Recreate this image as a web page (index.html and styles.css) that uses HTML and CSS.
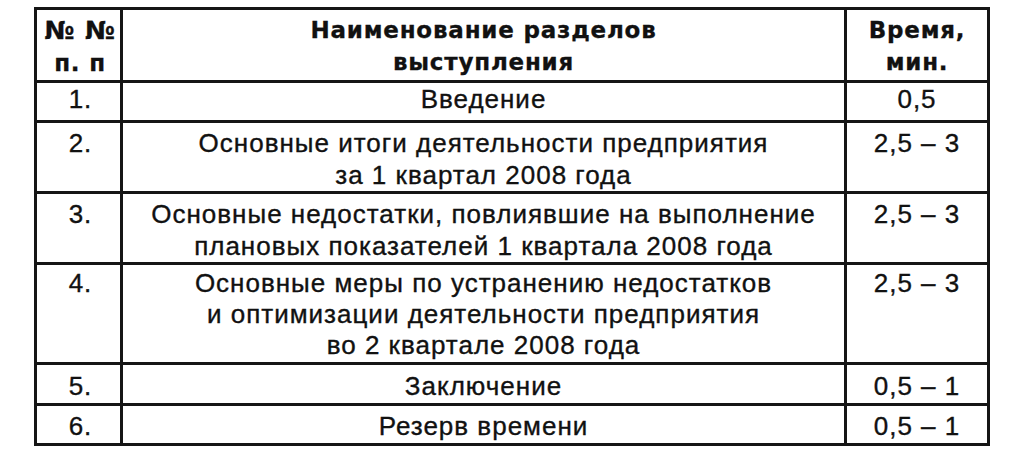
FILE: index.html
```html
<!DOCTYPE html>
<html lang="ru">
<head>
<meta charset="utf-8">
<title>Регламент выступления</title>
<link rel="stylesheet" href="styles.css">
</head>
<body>
<table class="plan">
  <colgroup>
    <col class="c-num">
    <col class="c-name">
    <col class="c-time">
  </colgroup>
  <thead>
    <tr class="r-head">
      <th class="num"><span class="no">№ №</span><br>п. п</th>
      <th class="name">Наименование разделов<br>выступления</th>
      <th class="time">Время,<br>мин.</th>
    </tr>
  </thead>
  <tbody>
    <tr class="r-1">
      <td class="num">1.</td>
      <td class="name">Введение</td>
      <td class="time">0,5</td>
    </tr>
    <tr class="r-2">
      <td class="num">2.</td>
      <td class="name">Основные итоги деятельности предприятия<br>за 1 квартал 2008 года</td>
      <td class="time">2,5 – 3</td>
    </tr>
    <tr class="r-3">
      <td class="num">3.</td>
      <td class="name">Основные недостатки, повлиявшие на выполнение<br>плановых показателей 1 квартала 2008 года</td>
      <td class="time">2,5 – 3</td>
    </tr>
    <tr class="r-4">
      <td class="num">4.</td>
      <td class="name">Основные меры по устранению недостатков<br>и оптимизации деятельности предприятия<br>во 2 квартале 2008 года</td>
      <td class="time">2,5 – 3</td>
    </tr>
    <tr class="r-5">
      <td class="num">5.</td>
      <td class="name">Заключение</td>
      <td class="time">0,5 – 1</td>
    </tr>
    <tr class="r-6">
      <td class="num">6.</td>
      <td class="name">Резерв времени</td>
      <td class="time">0,5 – 1</td>
    </tr>
  </tbody>
</table>
</body>
</html>
```

FILE: styles.css
```css
html, body {
  margin: 0;
  padding: 0;
  background: #ffffff;
}

body {
  padding: 7px 0 0 34px;
  color: #111111;
  font-family: "Liberation Sans", Arial, sans-serif;
}

.plan {
  border-collapse: separate;
  border-spacing: 0;
  border: 3px solid #151515;
  table-layout: fixed;
  width: 956px;
}

.c-num { width: 83px; }
.c-name { width: 724px; }
.c-time { width: 143px; }

.plan th,
.plan td {
  box-sizing: border-box;
  padding: 0;
  text-align: center;
  vertical-align: top;
  font-size: 26px;
  line-height: 32px;
  letter-spacing: 1px;
  -webkit-text-stroke: 0.35px #111111;
  border-color: #151515;
  border-style: solid;
  border-width: 0;
}

.plan th + th,
.plan td + td {
  border-left-width: 3px;
}

.plan tbody td {
  border-top-width: 3px;
}

.plan th {
  font-family: "DejaVu Sans", "Liberation Sans", sans-serif;
  font-weight: bold;
  font-size: 23px;
  line-height: 32px;
  letter-spacing: 0.8px;
  padding-top: 4px;
  -webkit-text-stroke: 0.3px #111111;
}

.plan th.num {
  padding-top: 5px;
  padding-left: 3px;
}

.plan th .no {
  font-size: 25px;
}

.plan td.num {
  padding-left: 4px;
}

.r-head { height: 70px; }
.r-1 { height: 40px; }
.r-2 { height: 71px; }
.r-3 { height: 71px; }
.r-4 { height: 100px; }
.r-5 { height: 41px; }
.r-6 { height: 40px; }

.r-1 td { padding-top: 0; }
.r-2 td { padding-top: 4px; }
.r-3 td { padding-top: 4px; }
.r-4 td { padding-top: 3px; line-height: 31px; }
.r-5 td { padding-top: 5px; }
.r-6 td { padding-top: 4px; }
```
